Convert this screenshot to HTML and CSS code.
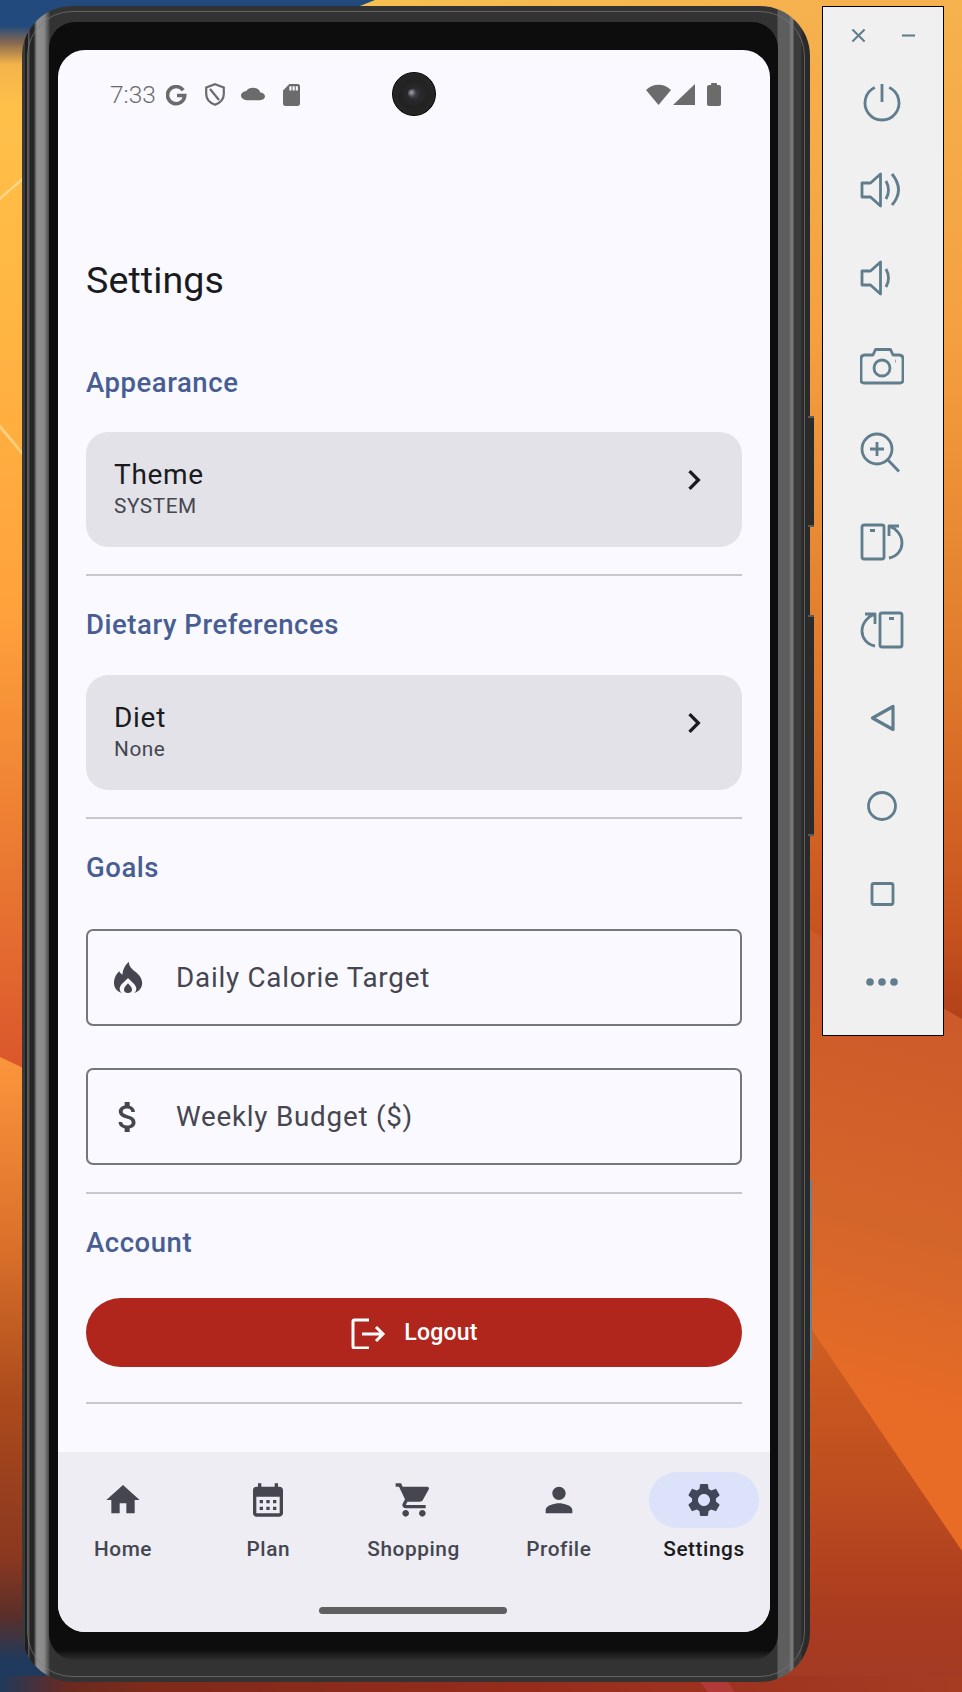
FILE: index.html
```html
<!DOCTYPE html>
<html lang="en">
<head>
  <meta charset="UTF-8">
  <title>Settings - Emulator</title>
  <link rel="stylesheet" href="styles.css">
</head>
<body>
  <!-- wallpaper, only the parts around the phone show -->
  <svg class="wallpaper" viewBox="0 0 962 1692">
    <defs>
      <linearGradient id="leftTop" gradientUnits="userSpaceOnUse" x1="0" y1="0" x2="0" y2="1080">
        <stop offset="0" stop-color="#234a7c"/>
        <stop offset="0.024" stop-color="#234a7c"/>
        <stop offset="0.04" stop-color="#8a6a50"/>
        <stop offset="0.06" stop-color="#f5b44a"/>
        <stop offset="0.1" stop-color="#ffc04a"/>
        <stop offset="0.3" stop-color="#ffb542"/>
        <stop offset="0.56" stop-color="#ffa23c"/>
        <stop offset="0.75" stop-color="#ee8133"/>
        <stop offset="1" stop-color="#d9552c"/>
      </linearGradient>
      <linearGradient id="leftLow" gradientUnits="userSpaceOnUse" x1="0" y1="1060" x2="0" y2="1692">
        <stop offset="0" stop-color="#fb953c"/>
        <stop offset="0.3" stop-color="#d8702a"/>
        <stop offset="0.54" stop-color="#ac4a1c"/>
        <stop offset="0.79" stop-color="#8a3820"/>
        <stop offset="0.88" stop-color="#5a2f2a"/>
        <stop offset="0.95" stop-color="#1f3a5c"/>
        <stop offset="1" stop-color="#1f3a5c"/>
      </linearGradient>
      <linearGradient id="rightTop" gradientUnits="userSpaceOnUse" x1="0" y1="0" x2="0" y2="1030">
        <stop offset="0" stop-color="#f5b24e"/>
        <stop offset="0.32" stop-color="#f5a040"/>
        <stop offset="0.65" stop-color="#e07a2b"/>
        <stop offset="0.9" stop-color="#c9531f"/>
        <stop offset="1" stop-color="#ae3f18"/>
      </linearGradient>
      <linearGradient id="rightMid" gradientUnits="userSpaceOnUse" x1="962" y1="1030" x2="860" y2="1400">
        <stop offset="0" stop-color="#cd5a2a"/>
        <stop offset="0.55" stop-color="#d4652a"/>
        <stop offset="1" stop-color="#e86c26"/>
      </linearGradient>
      <linearGradient id="rightLow" gradientUnits="userSpaceOnUse" x1="0" y1="1330" x2="0" y2="1692">
        <stop offset="0" stop-color="#cf5f22"/>
        <stop offset="0.45" stop-color="#bd4c1f"/>
        <stop offset="0.8" stop-color="#a93b20"/>
        <stop offset="1" stop-color="#a23a24"/>
      </linearGradient>
      <linearGradient id="bottomStrip" gradientUnits="userSpaceOnUse" x1="0" y1="0" x2="962" y2="0">
        <stop offset="0" stop-color="#1f3a5c"/>
        <stop offset="0.07" stop-color="#6a2a20"/>
        <stop offset="0.16" stop-color="#7f2a1a"/>
        <stop offset="0.55" stop-color="#962c1c"/>
        <stop offset="1" stop-color="#a63c22"/>
      </linearGradient>
      <linearGradient id="topStrip" gradientUnits="userSpaceOnUse" x1="358" y1="0" x2="962" y2="0">
        <stop offset="0" stop-color="#f5c052"/>
        <stop offset="1" stop-color="#f4ae4a"/>
      </linearGradient>
    </defs>
    <rect x="0" y="0" width="962" height="10" fill="url(#topStrip)"/>
    <polygon points="0,0 375,0 355,8 0,30" fill="#234a7c"/>
    <rect x="0" y="0" width="70" height="1080" fill="url(#leftTop)"/>
    <polygon points="0,1057 70,1090 70,1692 0,1692" fill="url(#leftLow)"/>
    <polygon points="0,197 22,178 22,181 0,200" fill="#ffd98a"/>
    <polygon points="0,424 22,451 22,455 0,429" fill="#ffd07c"/>
    <rect x="760" y="0" width="202" height="1040" fill="url(#rightTop)"/>
    <polygon points="760,901 962,1019 962,1551 810,1327 760,1254" fill="url(#rightMid)"/>
    <polygon points="760,1254 962,1551 962,1692 760,1692" fill="url(#rightLow)"/>
    <rect x="0" y="1676" width="962" height="16" fill="url(#bottomStrip)"/>
    <polygon points="700,1682 728,1682 735,1692 708,1692" fill="#b03a38"/>
  </svg>

  <div class="phone">
    <span class="side-btn power"></span>
    <span class="side-btn volume"></span>
    <span class="side-strip"></span>
    <div class="bezel">
      <div class="screen">
        <div class="status-bar">
          <span class="clock">7:33</span>
          <svg class="st-g" viewBox="0 0 22 22"><path d="M18 5.5A9 9 0 1 0 19.6 11H11.5"/></svg>
          <svg class="st-shield" viewBox="0 0 20 23"><path d="M10 1.2 18.8 4.4V11C18.8 16.6 14.6 20 10 21.8 5.4 20 1.200 16.600 1.200 11V4.400ZM5 6 14 17"/></svg>
          <svg class="st-cloud" viewBox="0 3 24 18" preserveAspectRatio="none"><path d="M19.350 10.040C18.670 6.590 15.640 4 12 4 9.110 4 6.600 5.640 5.350 8.040 2.340 8.360 0 10.910 0 14c0 3.310 2.690 6 6 6h13c2.760 0 5-2.240 5-5 0-2.640-2.050-4.780-4.650-4.960z"/></svg>
          <svg class="st-sd" viewBox="4 2 16 20" preserveAspectRatio="none"><path d="M18 2h-8L4.020 8 4 20c0 1.100.9 2 2 2h12c1.100 0 2-.9 2-2V4c0-1.100-.9-2-2-2zm-6 6h-2V4h2v4zm3 0h-2V4h2v4zm3 0h-2V4h2v4z"/></svg>
          <span class="st-spacer"></span>
          <svg class="st-wifi" viewBox="0 0 25 22"><path d="M0 7C7 0 18 0 25 7L12.500 22Z"/></svg>
          <svg class="st-signal" viewBox="0 0 22 21"><path d="M22 0V21H0Z"/></svg>
          <svg class="st-battery" viewBox="0 0 14 23"><path d="M4 2V1C4 .5 4.500 0 5 0H9C9.500 0 10 .5 10 1V2H12C13 2 14 3 14 4V21C14 22 13 23 12 23H2C1 23 0 22 0 21V4C0 3 1 2 2 2Z"/></svg>
          <div class="camera"><span class="lens"></span></div>
        </div>

        <main class="content">
          <h1 class="page-title">Settings</h1>

          <h2 class="section-title first">Appearance</h2>
          <div class="card">
            <div class="card-text">
              <div class="card-label">Theme</div>
              <div class="card-value">SYSTEM</div>
            </div>
            <svg class="chevron" viewBox="0 0 24 24"><path d="M10 6 8.590 7.410 13.170 12l-4.580 4.590L10 18l6-6z"/></svg>
          </div>
          <hr class="divider">

          <h2 class="section-title">Dietary Preferences</h2>
          <div class="card">
            <div class="card-text">
              <div class="card-label">Diet</div>
              <div class="card-value">None</div>
            </div>
            <svg class="chevron" viewBox="0 0 24 24"><path d="M10 6 8.590 7.410 13.170 12l-4.580 4.590L10 18l6-6z"/></svg>
          </div>
          <hr class="divider">

          <h2 class="section-title">Goals</h2>
          <div class="field field-first">
            <svg class="field-icon" viewBox="0 0 24 24">
              <path d="M12.500 2.200C12.500 5 14.500 6.500 16 8 18.800 10 20.500 12.500 20.500 15.200 20.500 19 17 21.600 12 21.600 7 21.600 3.600 19 3.600 15.200 3.600 12 5 9.500 6.800 8 7.200 9 7.800 9.600 8.700 10 8.700 7 10.500 4 12.500 2.200Z"/>
              <path class="flame-hole" d="M12 12C10.500 13.800 7 16 7 18.500 7 20 8 21 9 21.800H15C16 21 17 20 17 18.500 17 16 13.500 13.800 12 12Z"/>
              <path d="M12 15.200C11 16.400 9.600 17.500 9.600 19 9.600 20.300 10.600 21 12 21 13.400 21 14.400 20.300 14.400 19 14.400 17.500 13 16.400 12 15.200Z"/>
            </svg>
            <span class="field-label">Daily Calorie Target</span>
          </div>
          <div class="field">
            <svg class="field-icon" viewBox="0 0 24 24"><path d="M11.800 10.900c-2.270-.59-3-1.200-3-2.150 0-1.090 1.010-1.850 2.700-1.850 1.780 0 2.440.85 2.500 2.100h2.210c-.07-1.720-1.120-3.300-3.210-3.810V3h-3v2.160c-1.940.42-3.500 1.680-3.500 3.610 0 2.310 1.910 3.460 4.700 4.130 2.500.6 3 1.480 3 2.410 0 .69-.49 1.790-2.700 1.790-2.060 0-2.870-.92-2.980-2.100h-2.200c.12 2.190 1.760 3.420 3.680 3.830V21h3v-2.150c1.950-.37 3.500-1.500 3.500-3.550 0-2.840-2.430-3.810-4.700-4.400z"/></svg>
            <span class="field-label">Weekly Budget ($)</span>
          </div>
          <hr class="divider">

          <h2 class="section-title">Account</h2>
          <button class="logout">
            <svg class="logout-icon" viewBox="0 0 36 32"><path d="M19 3H4.500C3.600 3 3 3.600 3 4.500V29.500C3 30.400 3.600 31 4.500 31H19M12 17H33M26 10 33 17 26 24"/></svg>
            <span>Logout</span>
          </button>
          <hr class="divider">
        </main>

        <nav class="bottom-nav">
          <div class="tabs">
            <div class="tab">
              <div class="tab-icon"><svg viewBox="0 0 24 24"><path d="M10 20v-6h4v6h5v-8h3L12 3 2 12h3v8z"/></svg></div>
              <span class="tab-label">Home</span>
            </div>
            <div class="tab">
              <div class="tab-icon"><svg viewBox="0 0 24 24"><path d="M19 4h-1V2h-2v2H8V2H6v2H5c-1.110 0-1.990.9-1.990 2L3 20c0 1.100.89 2 2 2h14c1.100 0 2-.9 2-2V6c0-1.100-.9-2-2-2zm0 16H5V10h14v10zM9 14H7v-2h2v2zm4 0h-2v-2h2v2zm4 0h-2v-2h2v2zm-8 4H7v-2h2v2zm4 0h-2v-2h2v2zm4 0h-2v-2h2v2z"/></svg></div>
              <span class="tab-label">Plan</span>
            </div>
            <div class="tab">
              <div class="tab-icon"><svg viewBox="0 0 24 24"><path d="M7 18c-1.100 0-1.990.9-1.990 2S5.900 22 7 22s2-.9 2-2-.9-2-2-2zM1 2v2h2l3.600 7.590-1.350 2.450c-.16.28-.25.61-.25.96 0 1.100.9 2 2 2h12v-2H7.420c-.14 0-.25-.11-.25-.25l.03-.12.9-1.630h7.450c.75 0 1.410-.41 1.750-1.030l3.580-6.490c.08-.14.12-.31.12-.48 0-.55-.45-1-1-1H5.210l-.94-2H1zm16 16c-1.100 0-1.990.9-1.990 2s.89 2 1.990 2 2-.9 2-2-.9-2-2-2z"/></svg></div>
              <span class="tab-label">Shopping</span>
            </div>
            <div class="tab">
              <div class="tab-icon"><svg viewBox="0 0 24 24"><path d="M12 12c2.210 0 4-1.790 4-4s-1.790-4-4-4-4 1.790-4 4 1.790 4 4 4zm0 2c-2.670 0-8 1.340-8 4v2h16v-2c0-2.660-5.330-4-8-4z"/></svg></div>
              <span class="tab-label">Profile</span>
            </div>
            <div class="tab active">
              <div class="tab-icon"><svg viewBox="0 0 24 24"><path d="M19.140 12.940c.04-.3.06-.61.06-.94 0-.32-.02-.64-.07-.94l2.030-1.580c.18-.14.23-.41.12-.61l-1.920-3.320c-.12-.22-.37-.29-.59-.22l-2.390.96c-.5-.38-1.030-.7-1.620-.94l-.36-2.540c-.04-.24-.24-.41-.48-.41h-3.840c-.24 0-.43.17-.47.41l-.36 2.540c-.59.24-1.130.57-1.620.94l-2.390-.96c-.22-.08-.47 0-.59.22L2.740 8.870c-.12.21-.08.47.12.61l2.030 1.580c-.05.3-.09.63-.09.94s.02.64.07.94l-2.030 1.580c-.18.14-.23.41-.12.61l1.920 3.320c.12.22.37.29.59.22l2.390-.96c.5.38 1.030.7 1.620.94l.36 2.540c.05.24.24.41.48.41h3.840c.24 0 .44-.17.47-.41l.36-2.540c.59-.24 1.130-.56 1.620-.94l2.390.96c.22.08.47 0 .59-.22l1.920-3.320c.12-.22.07-.47-.12-.61l-2.010-1.580zM12 15.600c-1.980 0-3.600-1.620-3.600-3.600s1.620-3.600 3.600-3.600 3.600 1.620 3.600 3.600-1.620 3.600-3.600 3.600z"/></svg></div>
              <span class="tab-label">Settings</span>
            </div>
          </div>
          <div class="gesture-bar"></div>
        </nav>
      </div>
    </div>
  </div>

  <aside class="tool-panel">
    <div class="panel-head">
      <svg class="head-icon" viewBox="0 0 16 16"><path d="M1.500 1.500 14.500 14.500M14.500 1.500 1.500 14.500"/></svg>
      <svg class="head-icon" viewBox="0 0 16 16"><path d="M1 8H15"/></svg>
    </div>
    <!-- power -->
    <div class="tool"><svg viewBox="0 0 44 44"><path d="M14.800 7.600A17 17 0 1 0 29.200 7.600M22 4V22"/></svg></div>
    <!-- volume up -->
    <div class="tool"><svg viewBox="0 0 44 44"><path d="M2 15H10.500L20.500 6V38L10.500 29H2ZM26 13Q31 22 26 31M32 6Q45 22 32 37"/></svg></div>
    <!-- volume down -->
    <div class="tool"><svg viewBox="0 0 44 44"><path d="M2 15H10.500L20.500 6V38L10.500 29H2ZM26 13Q31 22 26 31"/></svg></div>
    <!-- camera -->
    <div class="tool"><svg viewBox="0 0 44 44"><path d="M5 11H13L15.500 5.500H30.500L33 11H39C41.500 11 43 12.500 43 15V36C43 38 42 39 40 39H4C2 39 1 38 1 36V15C1 12.500 2.500 11 5 11ZM35 17H35.600"/><circle cx="22" cy="24" r="8"/></svg></div>
    <!-- zoom -->
    <div class="tool"><svg viewBox="0 0 44 44"><circle cx="17" cy="17" r="15"/><path d="M17 10V24M10 17H24M28 28 39 39.500"/></svg></div>
    <!-- rotate right -->
    <div class="tool"><svg viewBox="0 0 44 44"><rect x="2" y="5" width="22" height="34" rx="2"/><path d="M10 10.500H15M29 38C37 36.500 42 30 42 23 42 15 36 8.500 29 6M29 16V6H39"/></svg></div>
    <!-- rotate left -->
    <div class="tool flip"><svg viewBox="0 0 44 44"><rect x="2" y="5" width="22" height="34" rx="2"/><path d="M10 10.500H15M29 38C37 36.500 42 30 42 23 42 15 36 8.500 29 6M29 16V6H39"/></svg></div>
    <!-- back -->
    <div class="tool"><svg viewBox="0 0 44 44"><path class="round" d="M12.500 22 33 10.500V33.500Z"/></svg></div>
    <!-- home -->
    <div class="tool"><svg viewBox="0 0 44 44"><circle cx="22" cy="22" r="13.500"/></svg></div>
    <!-- overview -->
    <div class="tool"><svg viewBox="0 0 44 44"><rect x="12" y="11.500" width="21" height="21" rx="2"/></svg></div>
    <!-- more -->
    <div class="tool"><svg class="dots" viewBox="0 0 44 44"><circle cx="10" cy="22" r="3.800"/><circle cx="22" cy="22" r="3.800"/><circle cx="34" cy="22" r="3.800"/></svg></div>
  </aside>
</body>
</html>
```

FILE: styles.css
```css
* {
  box-sizing: border-box;
}

body {
  margin: 0;
  width: 962px;
  height: 1692px;
  position: relative;
  overflow: hidden;
  background-color: #c8602a;
  font-family: "Roboto", "Liberation Sans", sans-serif;
}

.wallpaper {
  position: absolute;
  left: 0;
  top: 0;
  width: 962px;
  height: 1692px;
}

/* phone frame */
.phone {
  position: absolute;
  left: 22px;
  top: 6px;
  width: 788px;
  height: 1676px;
  padding: 16px 32px 22px 27px;
  border-radius: 50px;
  background: linear-gradient(to right,
    #3a3a3a 0, #3a3a3a 3px, #1f1f1f 3px, #1f1f1f 6px, #555 6px, #555 7px,
    #252525 8px, #252525 12px, #5a5a5a 13px, #8f8f8f 15px, #8a8a8a 22px,
    #4a4a4a 27px, #333 28px, #333 755px, #5e5e5e 756px, #5e5e5e 767px, #787878 769px,
    #787878 771px, #3a3a3a 772px, #3a3a3a 779px, #2a2a2a 780px, #2a2a2a 788px);
}

.phone::before {
  content: "";
  position: absolute;
  inset: 5px;
  border-radius: 45px;
  border: 1px solid rgba(120, 120, 120, 0.7);
}

.side-btn {
  position: absolute;
  left: 786px;
  width: 6px;
  background-color: #2b2b2b;
  border-top: 2px solid #5a5a5a;
  border-bottom: 2px solid #5a5a5a;
}

.side-btn.power {
  top: 410px;
  height: 111px;
}

.side-btn.volume {
  top: 609px;
  height: 221px;
}

.side-strip {
  position: absolute;
  left: 788px;
  top: 1174px;
  width: 2px;
  height: 180px;
  background-color: #70808a;
}

.bezel {
  position: relative;
  height: 100%;
  padding: 28px 8px 28px 9px;
  border-radius: 26px;
  background: linear-gradient(#0d0d0d calc(100% - 10px), #2e2e2e);
}

.screen {
  position: relative;
  height: 100%;
  display: flex;
  flex-direction: column;
  border-radius: 27px;
  overflow: hidden;
  background-color: #f9f9ff;
}

/* status bar */
.status-bar {
  position: relative;
  flex: none;
  height: 88px;
  display: flex;
  align-items: center;
  padding: 0 49px 0 52px;
  color: #6b6b6b;
}

.status-bar svg {
  flex: none;
  fill: currentColor;
}

.clock {
  font-size: 24.500px;
  font-weight: 300;
  width: 56px;
}

.st-g {
  width: 21px;
  height: 21px;
  margin-top: 2px;
  margin-right: 18px;
}

.status-bar .st-g path,
.status-bar .st-shield path {
  fill: none;
  stroke: currentColor;
}

.status-bar .st-g path {
  stroke-width: 3.800;
}

.status-bar .st-shield path {
  stroke-width: 2.200;
}

.st-shield {
  width: 20px;
  height: 23px;
  margin-top: 1px;
  margin-right: 16px;
}

.st-cloud {
  width: 24px;
  height: 14px;
  margin-top: -1px;
  margin-right: 18px;
}

.st-sd {
  width: 17px;
  height: 22px;
  margin-top: 1px;
}

.st-spacer {
  flex: 1;
}

.st-wifi {
  width: 25px;
  height: 22px;
  margin-right: 2px;
}

.st-signal {
  width: 22px;
  height: 21px;
  margin-right: 12px;
}

.st-battery {
  width: 14px;
  height: 23px;
}

.camera {
  position: absolute;
  left: 334px;
  top: 22px;
  width: 44px;
  height: 44px;
  border-radius: 50%;
  border: 1.500px solid #000;
  background: radial-gradient(circle at 50% 50%, #4a4650 0, #2a2a2e 20%, #222 45%, #2c2c2c 100%);
}

.lens {
  position: absolute;
  left: 15px;
  top: 16px;
  width: 9px;
  height: 9px;
  border-radius: 50%;
  background: radial-gradient(circle at 40% 40%, #a8a4b0 0, #4a4650 50%, #222 100%);
}

/* page content */
.content {
  flex: 1;
  padding: 118px 28px 0;
}

.page-title {
  margin: 0 0 59px;
  font-size: 37.600px;
  line-height: 48px;
  font-weight: 400;
  letter-spacing: 0.100px;
  color: #1a1b20;
}

.section-title {
  margin: 29px 0 30px;
  font-size: 27.500px;
  line-height: 40px;
  font-weight: 500;
  letter-spacing: 0.550px;
  color: #485e92;
}

.section-title.first {
  margin: 0 0 29px;
}

.card {
  height: 115px;
  display: flex;
  justify-content: space-between;
  align-items: flex-start;
  padding: 24px 28px 0;
  border-radius: 22px;
  background-color: #e2e2e8;
}

.card-label {
  font-size: 28px;
  line-height: 38px;
  letter-spacing: 0.700px;
  color: #1a1b20;
}

.card-value {
  font-size: 20.800px;
  line-height: 24px;
  letter-spacing: 0.550px;
  color: #45464f;
}

.chevron {
  width: 40px;
  height: 40px;
  margin-top: 4px;
  fill: #1a1b20;
}

.divider {
  margin: 27px 0 0;
  height: 2px;
  border: 0;
  background-color: #c8c7cf;
}

.field {
  height: 97px;
  margin-top: 42px;
  display: flex;
  align-items: center;
  gap: 28px;
  padding-left: 20px;
  border: 2px solid #75777f;
  border-radius: 7px;
}

.field-first {
  margin-top: 41px;
}

.field-icon {
  width: 40px;
  height: 40px;
  fill: #45464f;
}

.flame-hole {
  fill: #f9f9ff;
}

.field-label {
  font-size: 27.800px;
  letter-spacing: 0.760px;
  color: #45464f;
}

.logout {
  width: 100%;
  height: 69px;
  margin: 35px 0 0;
  display: flex;
  align-items: center;
  justify-content: center;
  gap: 18px;
  padding: 0;
  border: 0;
  border-radius: 35px;
  background-color: #b0261c;
  color: #fff;
  font-family: inherit;
  font-size: 23.100px;
  font-weight: 500;
  letter-spacing: 0.160px;
}

.logout-icon {
  width: 36px;
  height: 32px;
  fill: none;
  stroke: #fff;
  stroke-width: 3;
}

.logout + .divider {
  margin-top: 35px;
}

/* bottom navigation */
.bottom-nav {
  flex: none;
  height: 180px;
  padding: 20px 11px 0 10px;
  background-color: #eeedf4;
}

.tabs {
  display: flex;
  justify-content: space-between;
}

.tab {
  width: 110px;
  display: flex;
  flex-direction: column;
  align-items: center;
  gap: 8px;
}

.tab-icon {
  width: 110px;
  height: 56px;
  display: flex;
  align-items: center;
  justify-content: center;
  border-radius: 28px;
}

.tab-icon svg {
  width: 40px;
  height: 40px;
  fill: #45464f;
}

.tab-label {
  font-size: 20.800px;
  line-height: 27px;
  font-weight: 500;
  letter-spacing: 0.570px;
  white-space: nowrap;
  color: #45464f;
}

.tab.active .tab-icon {
  background-color: #dce2f9;
}

.tab.active svg {
  fill: #414659;
}

.tab.active .tab-label {
  color: #1a1b20;
}

.gesture-bar {
  width: 188px;
  height: 7px;
  margin: 44px auto 0;
  position: relative;
  left: -1px;
  border-radius: 4px;
  background-color: #5f5f62;
}

/* emulator tool panel */
.tool-panel {
  position: absolute;
  left: 822px;
  top: 6px;
  width: 122px;
  height: 1030px;
  display: flex;
  flex-direction: column;
  border: 1.500px solid #000;
  background-color: #f0f0f0;
}

.panel-head {
  height: 50.500px;
  display: flex;
  justify-content: space-between;
  padding: 21px 27px 0 27.500px;
}

.head-icon {
  width: 15px;
  height: 15px;
  fill: none;
  stroke: #5f7d8c;
  stroke-width: 2.200;
}

.tool {
  flex: none;
  height: 88px;
  padding-left: 36.500px;
  display: flex;
  align-items: center;
}

.tool svg {
  width: 44px;
  height: 44px;
  fill: none;
  stroke: #5f7d8c;
  stroke-width: 2.800;
  stroke-linejoin: round;
  stroke-linecap: butt;
}

.tool.flip svg {
  transform: scaleX(-1);
}

.tool .round {
  stroke-width: 3.200;
}

.tool .dots {
  fill: #5f7d8c;
  stroke: none;
}
```
